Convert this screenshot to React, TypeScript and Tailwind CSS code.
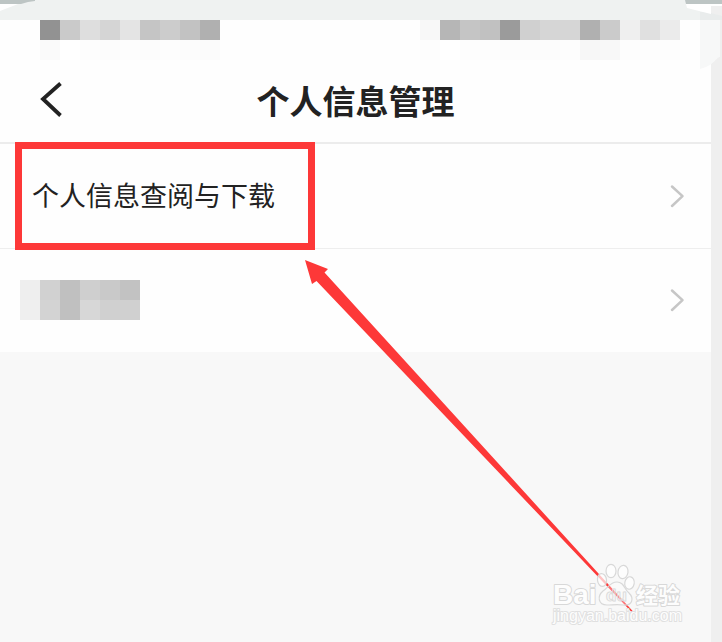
import React from 'react';

const leftBlocks = [
  ['#929292', '#fafafa'],
  ['#cacaca', '#ffffff'],
  ['#dedede', '#fdfdfd'],
  ['#d5d5d5', '#fcfcfc'],
  ['#e4e4e4', '#fdfdfd'],
  ['#c5c5c5', '#fcfcfc'],
  ['#cccccc', '#fdfdfd'],
  ['#c2c2c2', '#fcfcfc'],
  ['#b0b0b0', '#fbfbfb'],
];

const rightBlocks = [
  ['#f8f8f8', '#fdfdfd'],
  ['#b6b6b6', '#ffffff'],
  ['#c5c5c5', '#fdfdfd'],
  ['#c1c1c1', '#fdfdfd'],
  ['#9b9b9b', '#fcfcfc'],
  ['#d0d0d0', '#fcfcfc'],
  ['#d6d6d6', '#fcfcfc'],
  ['#d6d6d6', '#fdfdfd'],
  ['#b0b0b0', '#f7f7f7'],
  ['#cbcbcb', '#f8f8f8'],
  ['#efefef', '#fdfdfd'],
  ['#e0e0e0', '#fdfdfd'],
  ['#ebebeb', '#fdfdfd'],
];

const nameBlocks = [
  ['#eeeeee', '#efefef'],
  ['#d1d1d1', '#d3d3d3'],
  ['#c0c0c0', '#c0c0c0'],
  ['#cfcfcf', '#d7d7d7'],
  ['#c9c9c9', '#d0d0d0'],
  ['#c2c2c2', '#d0d0d0'],
];

const Mosaic = ({ blocks }: { blocks: string[][] }) => (
  <span className="flex" aria-hidden="true">
    {blocks.map((column, i) => (
      <span key={i} className="block">
        {column.map((color, j) => (
          <span key={j} className="block size-5" style={{ backgroundColor: color }} />
        ))}
      </span>
    ))}
  </span>
);

const ChevronRight = () => (
  <svg className="w-4 h-6 shrink-0" viewBox="0 0 16 24" fill="none" aria-hidden="true">
    <path d="M3 2.5L13.5 12.2L3 22" stroke="#c6c6c6" strokeWidth="2.5" strokeLinecap="round" strokeLinejoin="round" />
  </svg>
);

const TopBanner = () => (
  <div className="relative h-5 bg-[#eff2f1]">
    <svg className="absolute left-0 top-0" width="36" height="12" viewBox="0 0 36 12" aria-hidden="true">
      <path d="M0 11L18 4H0Z" fill="#ffffff" />
      <path d="M0 0H35V1L28 2L21 4H0Z" fill="#bdc5c4" />
    </svg>
    <svg className="absolute right-0 top-0" width="37" height="70" viewBox="0 0 37 70" aria-hidden="true">
      <path d="M15 12H37V20H15Z" fill="#e9ecec" />
      <path d="M1 4H37V6H26V14L14 11L2 8Z" fill="#ffffff" />
      <path d="M26 6H37V16L26 13Z" fill="#efefef" />
      <path d="M0 0H37V4H1Z" fill="#bdc5c4" />
      <path d="M15 20H35V57C31 57 29 66 15 69Z" fill="#f7f8f8" />
    </svg>
  </div>
);

const Watermark = () => (
  <svg className="absolute right-9 bottom-3 z-20 pointer-events-none" width="136" height="68" viewBox="0 0 136 68" aria-hidden="true">
    <g fill="#ffffff" fillOpacity="0.7" stroke="#d8d8d8" strokeWidth="1.2">
      <ellipse cx="52" cy="18" rx="4.5" ry="6.5" transform="rotate(-8 52 18)" />
      <ellipse cx="61" cy="9" rx="5" ry="6.7" />
      <ellipse cx="73" cy="10" rx="5" ry="6.7" transform="rotate(8 73 10)" />
      <ellipse cx="79.5" cy="21" rx="4.7" ry="6.3" transform="rotate(10 79.5 21)" />
    </g>
    <path d="M67 20C60 20 58 26 53 29C47 34 48 43 57 43C62 43 67 42 73 43C83 44 84 36 79 31C74 27 74 20 67 20Z" fill="#ffffff" fillOpacity="0.3" stroke="#d8d8d8" strokeWidth="1.2" />
    <g fill="#fdfdfd" stroke="#d8d8d8" strokeWidth="2" strokeLinejoin="round" paintOrder="stroke" className="font-['Liberation_Sans','Noto_Sans_CJK_SC',sans-serif]">
      <text x="3" y="42" fontSize="28" fontWeight="700">Bai</text>
      <text x="56" y="39" fontSize="17" fontWeight="700" fillOpacity="0.2" strokeWidth="1">du</text>
      <text x="86" y="41" fontSize="22" fontWeight="700">经验</text>
      <text x="3" y="59" fontSize="16" stroke="#e0e0e0">jingyan.baidu.com</text>
    </g>
  </svg>
);

const App = () => {
  return (
    <div className="relative min-h-screen flex flex-col overflow-hidden bg-[#f8f8f8] text-[#222222] font-['Noto_Sans_CJK_SC',sans-serif]">
      <TopBanner />

      <div className="flex flex-1">
        <main className="flex-1 min-w-0">
          {/* Status bar */}
          <div className="flex justify-between h-10 pl-10 pr-[31px] bg-[#fefefe]">
            <Mosaic blocks={leftBlocks} />
            <Mosaic blocks={rightBlocks} />
          </div>

          {/* Title bar */}
          <header className="grid grid-cols-[80px_1fr_80px] items-center h-21 pb-0.5 border-b-2 border-[#ececec] bg-[#fefefe]">
            <button type="button" aria-label="返回" className="pl-10">
              <svg className="w-6 h-9" viewBox="0 0 24 36" fill="none" aria-hidden="true">
                <path d="M20.5 1.5L3 17L20.5 33.5" stroke="#222222" strokeWidth="3.8" />
              </svg>
            </button>
            <h1 className="text-center text-[33px] leading-10 font-bold">个人信息管理</h1>
          </header>

          {/* Settings list */}
          <ul className="bg-[#fefefe]">
            <li className="relative border-b border-[#eeeeee]">
              <a href="#" className="flex items-center justify-between h-26 pl-8 pr-[26px] text-[27px] leading-10">
                <span className="pb-0.5">个人信息查阅与下载</span>
                <ChevronRight />
              </a>
              <span className="absolute left-[15px] -top-0.5 w-[300px] h-27 border-7 border-[#fd3838] pointer-events-none" />
              <svg className="absolute left-[304px] top-[115px] pointer-events-none z-10" width="332" height="356" viewBox="0 0 332 356" aria-hidden="true">
                <path d="M1 1L24 10L20.5 13.5L330 353.5L329 354.5L12.5 22L8 25Z" fill="#fd3838" />
              </svg>
            </li>
            <li className="border-b border-[#fefefe]">
              <a href="#" aria-label="个人信息" className="flex items-center justify-between h-[102px] pl-5 pr-[26px]">
                <Mosaic blocks={nameBlocks} />
                <ChevronRight />
              </a>
            </li>
          </ul>
        </main>
        <div className="w-[11px] bg-[#efefef]" />
      </div>

      <Watermark />
    </div>
  );
};

export default App;
